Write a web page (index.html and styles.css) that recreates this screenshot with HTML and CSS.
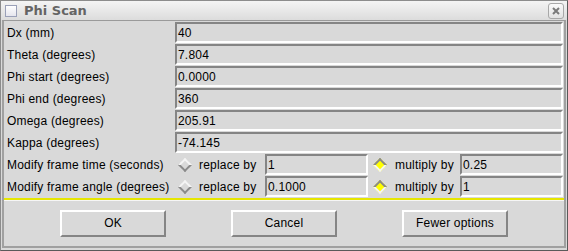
FILE: index.html
```html
<!DOCTYPE html>
<html>
<head>
<meta charset="utf-8">
<link rel="stylesheet" href="styles.css">
</head>
<body>
<div class="window">
  <div class="titlebar">
    <span class="wicon"></span>
    <span class="title">Phi Scan</span>
    <span class="close">
      <svg width="14" height="14" viewBox="0 0 14 14"><path d="M4 4L10 10M10 4L4 10" stroke="#7a7a7a" stroke-width="2"/></svg>
    </span>
  </div>
  <div class="client">
    <div class="form">
      <div class="lbl">Dx (mm)</div><div class="entry">40</div>
      <div class="lbl">Theta (degrees)</div><div class="entry">7.804</div>
      <div class="lbl">Phi start (degrees)</div><div class="entry">0.0000</div>
      <div class="lbl">Phi end (degrees)</div><div class="entry">360</div>
      <div class="lbl">Omega (degrees)</div><div class="entry">205.91</div>
      <div class="lbl">Kappa (degrees)</div><div class="entry">-74.145</div>
      <div class="lbl">Modify frame time (seconds)</div>
      <div class="opts">
        <span class="radio"></span><span class="rtext r1">replace by</span><div class="entry small">1</div>
        <span class="radio on"></span><span class="rtext r2">multiply by</span><div class="entry rest">0.25</div>
      </div>
      <div class="lbl">Modify frame angle (degrees)</div>
      <div class="opts">
        <span class="radio"></span><span class="rtext r1">replace by</span><div class="entry small">0.1000</div>
        <span class="radio on"></span><span class="rtext r2">multiply by</span><div class="entry rest">1</div>
      </div>
    </div>
    <div class="sep"></div>
    <div class="buttons">
      <div class="btn">OK</div>
      <div class="btn">Cancel</div>
      <div class="btn">Fewer options</div>
    </div>
  </div>
</div>
</body>
</html>
```
FILE: styles.css
```css
* { box-sizing: border-box; }
html, body { margin: 0; padding: 0; }
body {
  width: 568px; height: 251px; overflow: hidden;
  font-family: "Liberation Sans", Arial, sans-serif;
  font-size: 12px; letter-spacing: 0.2px; color: #000; background: #d9d9d9;
}
.window {
  width: 568px; height: 251px;
  border: 1px solid #8c8c8c;
  border-right-color: #5a5a5a; border-bottom-color: #5a5a5a;
  background: #d9d9d9;
  display: flex; flex-direction: column;
}
.titlebar {
  height: 19px; flex: none;
  background: linear-gradient(#f4f4f4, #dcdcdc);
  display: flex; align-items: center; padding: 0 3px 0 4px;
}
.wicon {
  width: 12px; height: 12px; border: 1px solid #9aa0b8;
  background: linear-gradient(#ffffff, #e6e6ee); margin-right: 7px;
}
.title {
  font-family: "DejaVu Sans", sans-serif; font-weight: bold; font-size: 13px;
  color: #646464; flex: 1; letter-spacing: 0;
}
.close {
  width: 16px; height: 16px; border: 1px solid #a8a8a8; border-radius: 3px;
  background: linear-gradient(#fafafa, #e2e2e2);
  display: flex; align-items: center; justify-content: center; margin-top: 1px;
}
.client {
  flex: 1; display: flex; flex-direction: column;
  border-left: 2px solid #a0a0a0; border-top: 1px solid #9a9a9a;
  border-right: 2px solid #a0a0a0; border-bottom: 2px solid #a0a0a0;
  margin: 0 1px 2px 1px;
}
.form {
  display: grid; grid-template-columns: 168px 1fr;
  grid-auto-rows: 21px; row-gap: 1px;
  padding: 1px 1px 0 3px;
}
.lbl { line-height: 23px; height: 21px; white-space: nowrap; }
.entry {
  border: 2px solid; border-color: #858585 #ffffff #ffffff #858585;
  background: #d9d9d9; line-height: 19px; padding-left: 1px;
  overflow: hidden;
}
.opts { display: flex; align-items: center; }
.entry.small { width: 103px; height: 21px; flex: none; }
.entry.rest { flex: 1; height: 21px; }
.radio {
  flex: none; width: 10px; height: 10px; margin: 0 9px 0 5px;
  transform: rotate(45deg);
  border: 2px solid; border-color: #f4f4f4 #8a8a8a #8a8a8a #f4f4f4;
  background: #d9d9d9;
}
.radio.on {
  background: #ffff00; margin-left: 7px; margin-right: 10px;
  border-color: #8a8a8a #f4f4f4 #f4f4f4 #8a8a8a;
}
.rtext { white-space: nowrap; flex: none; line-height: 23px; height: 21px; }
.r1 { width: 66px; }
.r2 { width: 65px; }
.sep {
  height: 3px; border-top: 2px solid #e6e600; border-bottom: 1px solid #f6f6f6;
  margin: 1px 0 0 0;
}
.buttons {
  flex: 1; display: flex; justify-content: center; align-items: center;
  gap: 65px; padding-bottom: 1px;
}
.btn {
  width: 106px; height: 27px; text-align: center; line-height: 23px;
  border: 2px solid; border-color: #ffffff #858585 #858585 #ffffff;
  background: #d9d9d9;
}
```
